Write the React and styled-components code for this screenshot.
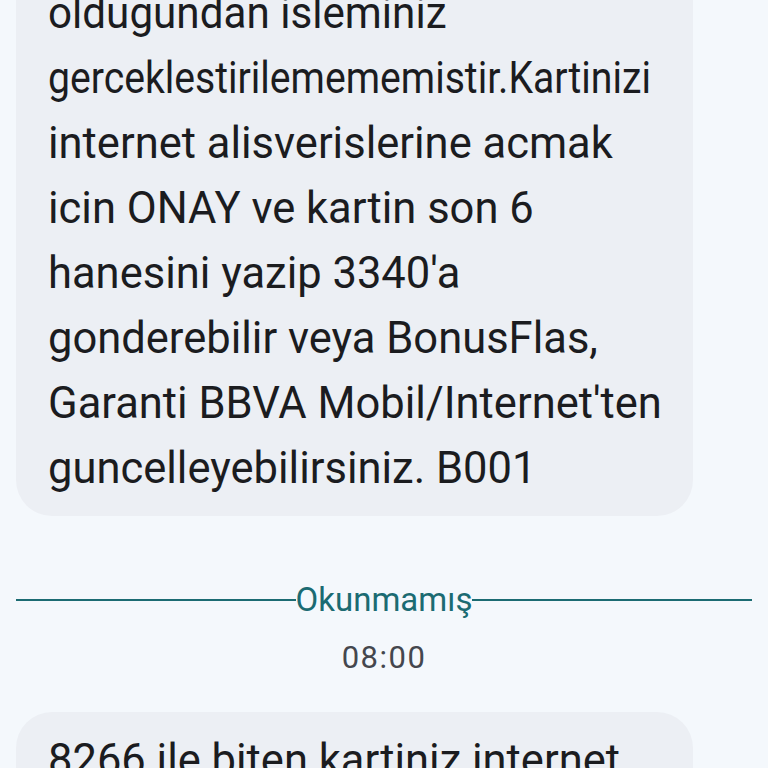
import React from "react";
import styled, { createGlobalStyle } from "styled-components";

const Global = createGlobalStyle`
  html, body { margin: 0; padding: 0; background: #f4f8fc; }
  body { overflow: hidden; font-family: Roboto, "Noto Sans", sans-serif; }
  #root { height: 768px; overflow: hidden; }
`;

const Screen = styled.div`
  width: 768px;
  height: 768px;
  overflow: hidden;
  background: #f4f8fc;
  display: flex;
  flex-direction: column;
`;

const Bubble = styled.div`
  margin: ${(p) => p.$top || 0}px 75px 0 16px;
  background: #eceff4;
  border-radius: 36px;
  padding: 16px 32px 15px 32px;
  color: #1b1c1f;
  font-size: 43.5px;
  line-height: 65px;
`;

const Line = styled.span`
  display: block;
  white-space: nowrap;
  transform-origin: left center;
  transform: ${(p) => (p.$squeeze ? `scaleX(${p.$squeeze})` : "none")};
`;

const Divider = styled.div`
  margin-top: 64px;
  padding: 0 16px;
  display: flex;
  align-items: center;
  color: #1b6b72;
  font-size: 33px;
  line-height: 40px;
  &::before, &::after {
    content: "";
    flex: 1;
    height: 2px;
    background: #1b6b72;
  }
`;

const Time = styled.div`
  margin-top: 18px;
  text-align: center;
  color: #44474e;
  font-size: 31px;
  letter-spacing: 1.5px;
  line-height: 40px;
`;

const lines1 = [
  { t: "oldugundan isleminiz", s: 0.97 },
  { t: "gerceklestirilemememistir.Kartinizi", s: 0.9 },
  { t: "internet alisverislerine acmak" },
  { t: "icin ONAY ve kartin son 6" },
  { t: "hanesini yazip 3340'a" },
  { t: "gonderebilir veya BonusFlas," },
  { t: "Garanti BBVA Mobil/Internet'ten" },
  { t: "guncelleyebilirsiniz. B001" },
];

export default function App() {
  return (
    <Screen>
      <Global />
      <Bubble $top={-35}>
        {lines1.map((l, i) => (
          <Line key={i} $squeeze={l.s}>
            {l.t}
          </Line>
        ))}
      </Bubble>
      <Divider>Okunmamış</Divider>
      <Time>08:00</Time>
      <Bubble $top={34}>
        <Line>8266 ile biten kartiniz internet</Line>
        <Line>alisverislerine kapali</Line>
      </Bubble>
    </Screen>
  );
}
